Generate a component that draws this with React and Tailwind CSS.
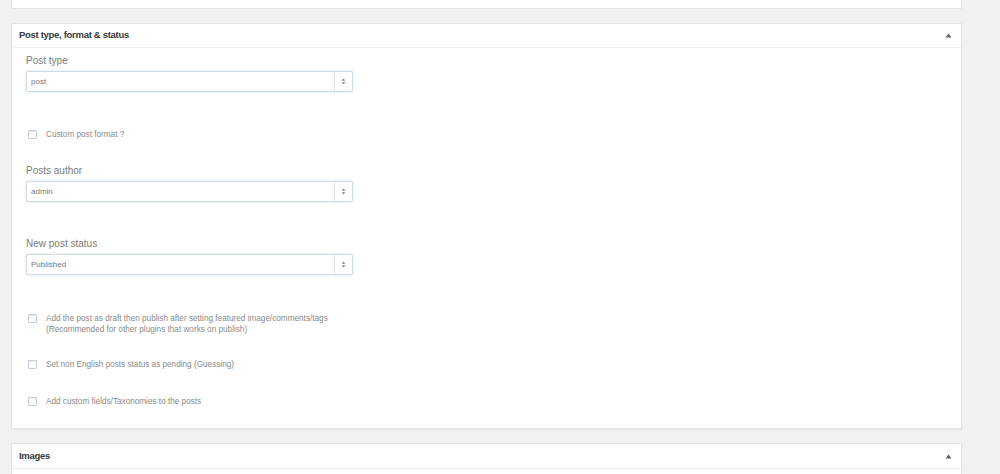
export default function App() {
  const font = { fontFamily: '"Liberation Sans", Arial, sans-serif' };
  const Select = ({ value }) => (
    <div className="flex h-[21px] w-[327px] items-stretch rounded-[2px] border border-[#cfdbe6] bg-white shadow-[0_0_3px_rgba(140,170,200,0.35)]">
      <div className="flex flex-1 items-center pl-[4px] text-[8px] text-[#777]">{value}</div>
      <div className="flex w-[18px] items-center justify-center border-l border-[#e2e6ea]">
        <svg width="5" height="7" viewBox="0 0 5 7">
          <path d="M2.5 0.5 L4.5 2.8 L0.5 2.8 Z" fill="#888" />
          <path d="M2.5 6.5 L4.5 4.2 L0.5 4.2 Z" fill="#888" />
        </svg>
      </div>
    </div>
  );
  const Check = () => (
    <div className="mt-[1px] h-[9px] w-[9px] shrink-0 rounded-[1px] border border-[#c5ccd3] bg-white shadow-[inset_0_1px_1px_rgba(0,0,0,0.08)]" />
  );
  const Label = ({ children, mt }) => (
    <div className={`${mt} text-[10px] leading-[12px] text-[#7a7a7a]`}>{children}</div>
  );
  const Arrow = () => (
    <svg width="7" height="5" viewBox="0 0 7 5">
      <path d="M3.5 0.5 L6.5 4.5 L0.5 4.5 Z" fill="#5f6368" />
    </svg>
  );
  return (
    <div className="flex h-[474px] w-[1000px] flex-col overflow-hidden bg-[#f1f1f1]" style={font}>
      <div className="ml-[11px] h-[9px] w-[951px] shrink-0 border border-t-0 border-[#e5e5e5] bg-white" />
      <div className="ml-[11px] mt-[14px] flex h-[406px] w-[951px] shrink-0 flex-col border border-[#e5e5e5] bg-white shadow-[0_1px_1px_rgba(0,0,0,0.04)]">
        <div className="flex h-[24px] items-center justify-between border-b border-[#eeeeee] pl-[7px] pr-[9px]">
          <span className="text-[9.5px] font-bold tracking-[-0.3px] text-[#32373c]">Post type, format &amp; status</span>
          <Arrow />
        </div>
        <div className="flex flex-col pl-[14px]">
          <Label mt="mt-[7px]">Post type</Label>
          <div className="mt-[4px]"><Select value="post" /></div>
          <div className="mt-[37px] flex items-start gap-[9px] pl-[2px] text-[8.2px] leading-[11px] text-[#8a8a8a]">
            <Check />
            <span>Custom post format ?</span>
          </div>
          <Label mt="mt-[25px]">Posts author</Label>
          <div className="mt-[4px]"><Select value="admin" /></div>
          <Label mt="mt-[36px]">New post status</Label>
          <div className="mt-[4px]"><Select value="Published" /></div>
          <div className="mt-[38px] flex items-start gap-[9px] pl-[2px] text-[8.2px] leading-[11px] text-[#8a8a8a]">
            <Check />
            <span>Add the post as draft then publish after setting featured image/comments/tags<br />(Recommended for other plugins that works on publish)</span>
          </div>
          <div className="mt-[24px] flex items-start gap-[9px] pl-[2px] text-[8.2px] leading-[11px] text-[#8a8a8a]">
            <Check />
            <span>Set non English posts status as pending (Guessing)</span>
          </div>
          <div className="mt-[26px] flex items-start gap-[9px] pl-[2px] text-[8.2px] leading-[11px] text-[#8a8a8a]">
            <Check />
            <span>Add custom fields/Taxonomies to the posts</span>
          </div>
        </div>
      </div>
      <div className="ml-[11px] mt-[14px] flex w-[951px] shrink-0 flex-col border border-[#e5e5e5] bg-white">
        <div className="flex h-[25px] items-center justify-between border-b border-[#eeeeee] pl-[7px] pr-[9px]">
          <span className="text-[9.5px] font-bold tracking-[-0.3px] text-[#32373c]">Images</span>
          <Arrow />
        </div>
        <div className="h-[20px]" />
      </div>
    </div>
  );
}
